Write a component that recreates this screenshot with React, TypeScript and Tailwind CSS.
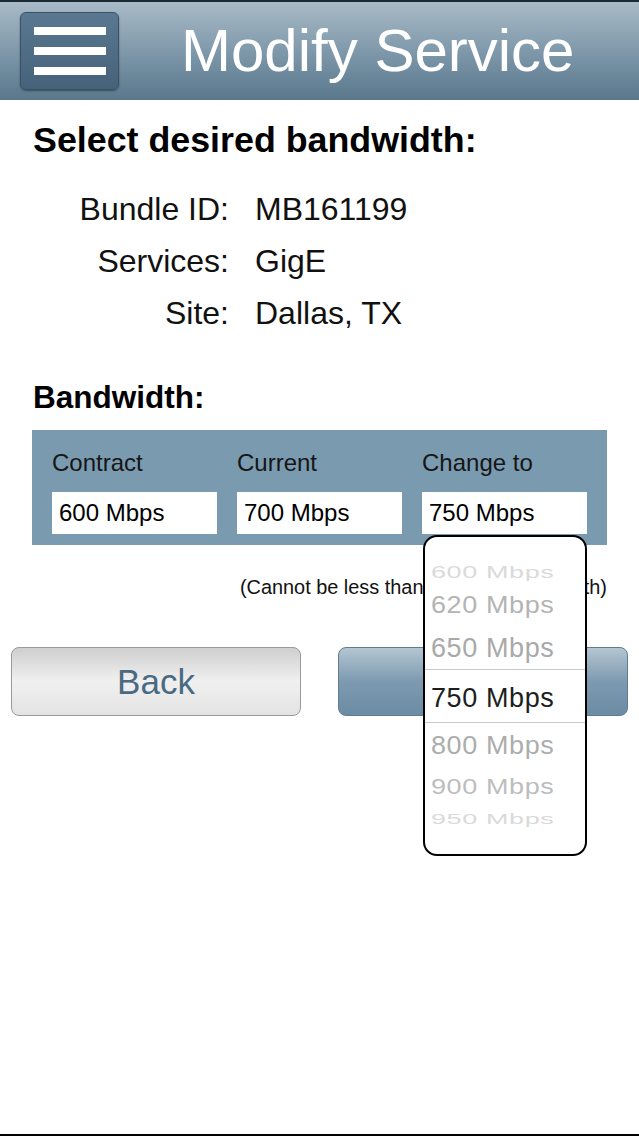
import React from "react";

const items = [
  { t: "600 Mbps", top: 22, s: 0.6, c: "text-[#dadada]" },
  { t: "620 Mbps", top: 54.5, s: 0.88, c: "text-[#b4b4b4]" },
  { t: "650 Mbps", top: 97.5, s: 1, c: "text-[#a9a9a9]" },
  { t: "750 Mbps", top: 147.5, s: 1, c: "text-[#1e1e1e]" },
  { t: "800 Mbps", top: 195, s: 0.95, c: "text-[#adadad]" },
  { t: "900 Mbps", top: 237, s: 0.82, c: "text-[#bdbdbd]" },
  { t: "950 Mbps", top: 268.5, s: 0.55, c: "text-[#dadada]" },
];

export default function App() {
  return (
    <div
      className="relative w-[639px] h-[1136px] bg-white flex flex-col overflow-hidden"
      style={{ fontFamily: '"Liberation Sans", Arial, sans-serif' }}
    >
      {/* Header */}
      <div className="h-[100px] shrink-0 border-t-2 border-[#1c2a35] bg-gradient-to-b from-[#a9bac6] via-[#7f99ab] to-[#5a778c] flex items-center">
        <div className="ml-[20px] w-[99px] h-[78px] rounded-[6px] border border-[#3a5166] bg-gradient-to-b from-[#5a7891] to-[#46627a] shadow-[0_1px_2px_rgba(0,0,0,0.4)] flex flex-col items-center justify-center gap-[12px]">
          <div className="w-[72px] h-[8px] bg-white" />
          <div className="w-[72px] h-[8px] bg-white" />
          <div className="w-[72px] h-[8px] bg-white" />
        </div>
        <div className="ml-[62px] text-white text-[60px] leading-none">Modify Service</div>
      </div>

      {/* Content */}
      <div className="mt-[23px] ml-[33px] text-[35.8px] leading-none font-bold text-black">
        Select desired bandwidth:
      </div>

      <div className="mt-[24px] grid grid-cols-[229px_1fr] text-[32px] leading-[52px] text-[#111]">
        <div className="text-right">Bundle ID:</div>
        <div className="pl-[26px]">MB161199</div>
        <div className="text-right">Services:</div>
        <div className="pl-[26px]">GigE</div>
        <div className="text-right">Site:</div>
        <div className="pl-[26px]">Dallas, TX</div>
      </div>

      <div className="mt-[43px] ml-[33px] text-[31.5px] leading-none font-bold text-black">Bandwidth:</div>

      <div className="mt-[17px] ml-[32px] w-[575px] h-[115px] bg-[#7a9ab0] pl-[20px] pt-[21px] grid grid-cols-[165px_165px_165px] gap-x-[20px]">
        {[
          ["Contract", "600 Mbps"],
          ["Current", "700 Mbps"],
          ["Change to", "750 Mbps"],
        ].map(([l, v]) => (
          <div key={l} className="flex flex-col">
            <div className="text-[24px] leading-none text-[#161616]">{l}</div>
            <div className="mt-[17px] h-[42px] bg-white flex items-center pl-[7px] text-[24px] leading-none text-black">
              {v}
            </div>
          </div>
        ))}
      </div>

      <div className="mt-[33px] ml-[32px] w-[575px] text-right text-[19.9px] leading-none text-[#111]">
        (Cannot be less than Contract bandwidth)
      </div>

      <div className="mt-[49px] ml-[11px] flex gap-[37px]">
        <div className="w-[290px] h-[69px] rounded-[8px] border border-[#9a9a9a] bg-gradient-to-b from-[#cfcfcf] via-[#f0f0f0] to-[#e3e3e3] flex items-center justify-center text-[35px] leading-none text-[#4a6a82]">
          Back
        </div>
        <div className="w-[290px] h-[69px] rounded-[8px] border border-[#5f7d92] bg-gradient-to-b from-[#b4c5d1] via-[#7d9ab0] to-[#6b8ca4] flex items-center justify-center text-[35px] leading-none text-white">
          Submit
        </div>
      </div>

      <div className="mt-auto h-[2px] bg-black shrink-0" />

      {/* Picker overlay */}
      <div className="absolute left-[423px] top-[535px] w-[164px] h-[321px] rounded-[14px] border-2 border-black bg-white overflow-hidden">
        <div className="absolute left-0 right-0 top-[132px] h-px bg-[#c8c8c8]" />
        <div className="absolute left-0 right-0 top-[185px] h-px bg-[#c8c8c8]" />
        {items.map((it) => (
          <div
            key={it.t}
            className={`absolute left-[6px] text-[27px] leading-none tracking-[0.6px] whitespace-nowrap ${it.c}`}
            style={{ top: it.top, transform: `scaleY(${it.s})` }}
          >
            {it.t}
          </div>
        ))}
      </div>
    </div>
  );
}
